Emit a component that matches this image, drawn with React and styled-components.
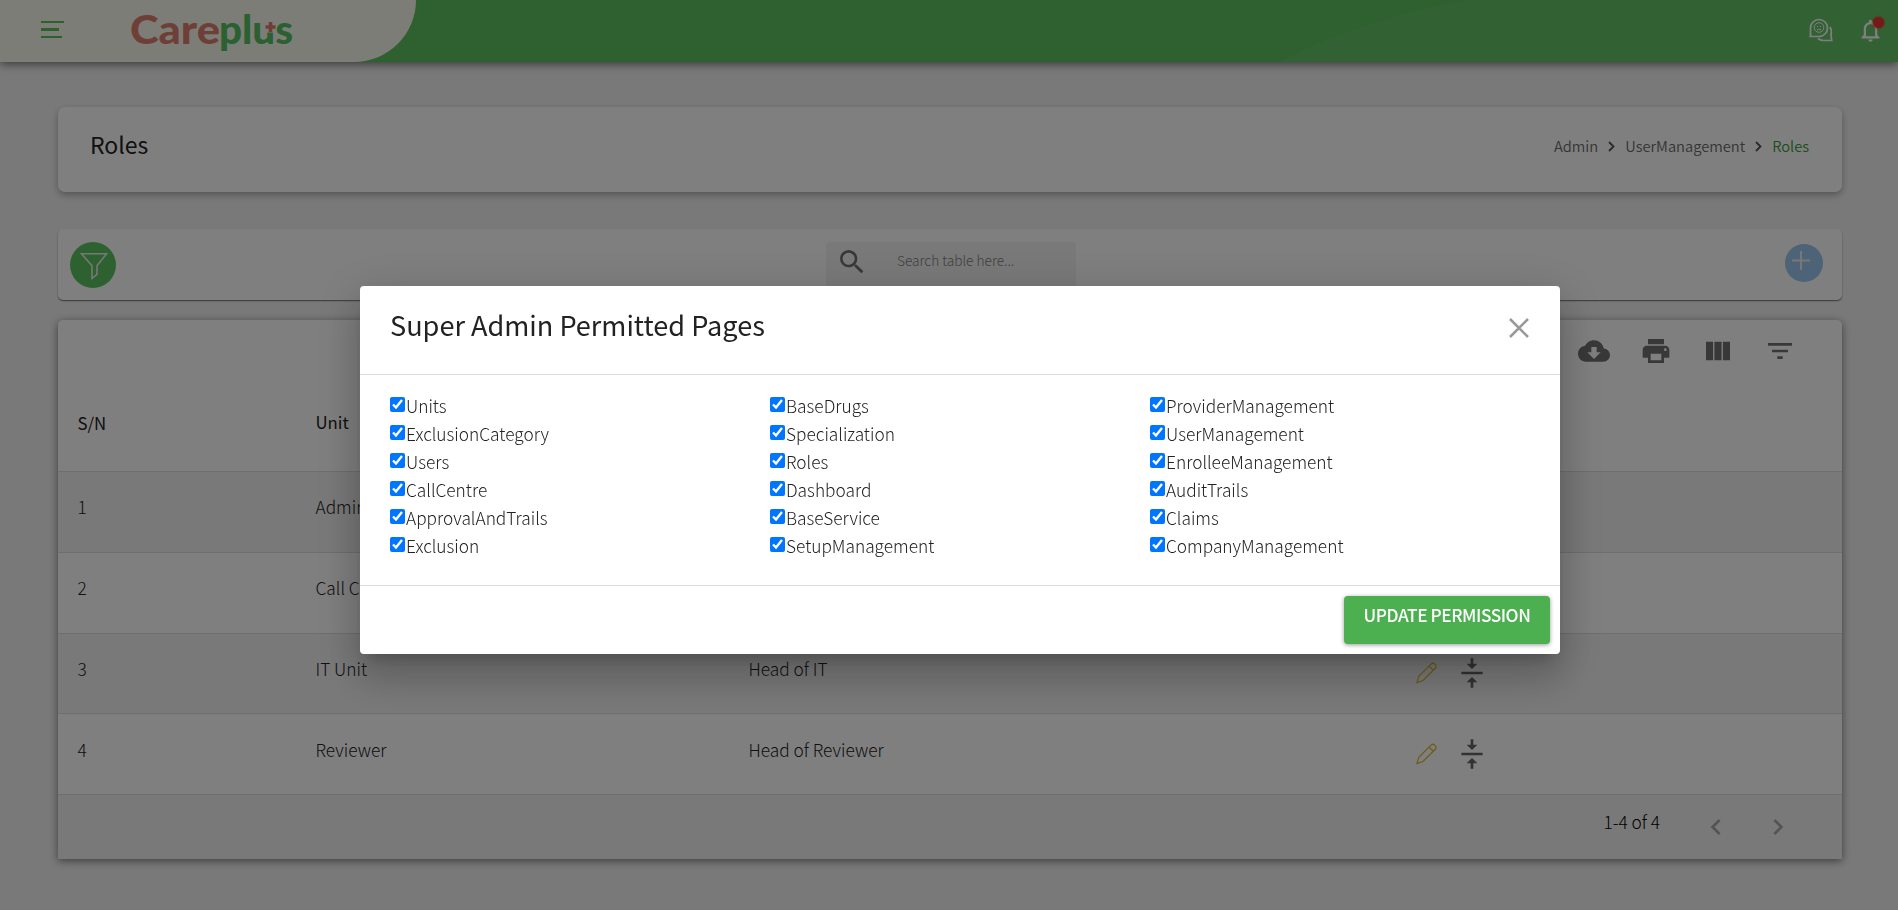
import React from "react";
import styled, { createGlobalStyle } from "styled-components";
import {
  MdCloudDownload, MdPrint, MdViewColumn, MdFilterList, MdSearch,
  MdVerticalAlignCenter, MdChevronLeft, MdChevronRight, MdNotificationsNone,
} from "react-icons/md";

const GlobalStyle = createGlobalStyle`
  *, *::before, *::after { box-sizing: border-box; }
  body {
    margin: 0;
    background: #f3f3f4;
    color: #222;
    font-family: "Noto Sans CJK SC", "Open Sans", sans-serif;
    font-size: 17.3px;
    font-weight: 300;
    line-height: 20px;
    overflow: hidden;
  }
`;

const Page = styled.div`
  height: 910px;
  display: flex;
  flex-direction: column;
`;

const TopBar = styled.header`
  position: relative;
  flex: none;
  height: 62px;
  display: flex;
  justify-content: space-between;
  background: #5cc25e;
  box-shadow: 0 2px 9px rgba(0, 0, 0, 0.55);
`;
const TopWave = styled.svg`
  position: absolute;
  top: 0;
  right: 0;
`;
const Brand = styled.div`
  width: 416px;
  display: flex;
  align-items: flex-start;
  padding-left: 41px;
  background: #fafbf0;
  border-bottom-right-radius: 62px;
`;
const Burger = styled.div`
  width: 23px;
  margin: 21px 67px 0 0;
  display: flex;
  flex-direction: column;
`;
const Bar = styled.span`
  width: ${(p) => p.$w}px;
  height: ${(p) => p.$h}px;
  margin-bottom: 5px;
  background: #58c25c;
`;
const Logo = styled.svg`
  margin: 4px 0 0 20px;
  overflow: visible;
`;
const TopIcons = styled.div`
  position: relative;
  display: flex;
  padding: 17px 14px 0 0;
  color: #fff;
`;
const ChatIcon = styled.svg`
  margin: 1px 24px 0 0;
`;
const Bell = styled.div`
  position: relative;
  height: 27px;
`;
const Dot = styled.span`
  position: absolute;
  top: 0;
  right: 0;
  width: 11px;
  height: 11px;
  border-radius: 50%;
  background: #ec3333;
  box-shadow: 0 0 2px 1px rgba(236, 51, 51, 0.55);
`;

const Main = styled.main`
  padding: 45px 56px 0 58px;
`;
const Card = styled.section`
  background: #fff;
`;
const TitleCard = styled(Card)`
  height: 85px;
  display: flex;
  justify-content: space-between;
  padding: 0 33px 0 32px;
  border-radius: 7px;
  box-shadow: 0 3px 7px rgba(0, 0, 0, 0.3);
`;
const PageTitle = styled.h1`
  margin: 22px 0 0;
  font-size: 23px;
  line-height: 30px;
  font-weight: 400;
`;
const Crumbs = styled.nav`
  display: flex;
  align-items: center;
  height: 20px;
  margin-top: 29px;
  gap: 10px;
  font-size: 14.7px;
  font-weight: 350;
  color: #6a6a6a;
`;
const Current = styled.span`
  color: #37993b;
`;

const FilterCard = styled(Card)`
  height: 71px;
  margin-top: 37px;
  display: flex;
  align-items: flex-start;
  justify-content: space-between;
  padding: 13px 19px 0 12px;
  border-radius: 5px;
  box-shadow: 0 1px 1.5px rgba(0, 0, 0, 0.55);
`;
const Round = styled.button`
  width: ${(p) => p.$size}px;
  height: ${(p) => p.$size}px;
  margin-top: ${(p) => p.$top || 0}px;
  padding: 0;
  border: 0;
  border-radius: 50%;
  background: ${(p) => p.$color};
  svg { display: block; }
`;
const SearchBox = styled.div`
  width: 250px;
  height: 46px;
  margin-right: -1px;
  display: flex;
  padding: 4px 10px;
  border-radius: 4px;
  background: #f2f2f2;
  color: #717171;
`;
const Placeholder = styled.span`
  margin: 4px 0 0 29px;
  font-size: 13.7px;
  color: #808080;
`;

const TableCard = styled(Card)`
  margin-top: 20px;
  height: 539px;
  border-radius: 5px 5px 0 0;
  box-shadow: 0 2px 9px rgba(0, 0, 0, 0.5);
`;
const Tools = styled.div`
  height: 64px;
  display: flex;
  justify-content: flex-end;
  gap: 30px;
  padding: 15px 46px 0 0;
  color: #717171;
`;
const Row = styled.div`
  height: 80.8px;
  display: grid;
  grid-template-columns: 238px 433px 667px 1fr;
  padding: 25.4px 0 0 19.5px;
  background: ${(p) => (p.$shade ? "#f2f2f2" : "#fff")};
  border-bottom: 1px solid #dcdcdc;
`;
const HeadRow = styled(Row)`
  height: 88px;
  padding: 28px 0 0 19.5px;
  font-weight: 400;
  font-size: 16.8px;
`;
const SerialHead = styled.span`
  padding-top: 1px;
`;
const Actions = styled.div`
  display: flex;
  gap: 18px;
  margin-top: -1.8px;
  color: #666;
`;
const Pencil = styled.svg`
  margin-top: 5px;
`;
const Pager = styled.div`
  height: 64px;
  display: flex;
  padding: 16px 48px 0 0;
  justify-content: flex-end;
  background: #f2f2f2;
  color: #000;
  svg { color: #a8a8a8; }
`;
const PageRange = styled.span`
  padding-top: 1px;
`;
const PagerButton = styled.span`
  width: 32px;
  margin-left: ${(p) => p.$gap}px;
`;

const Overlay = styled.div`
  position: fixed;
  inset: 0;
  padding: 286px 338px 0 360px;
  background: rgba(0, 0, 0, 0.5);
`;
const Dialog = styled.div`
  width: 1200px;
  height: 368px;
  display: flex;
  flex-direction: column;
  border-radius: 4px;
  background: #fff;
  box-shadow: 0 11px 15px -7px rgba(0, 0, 0, 0.2), 0 24px 38px 3px rgba(0, 0, 0, 0.14),
    0 9px 46px 8px rgba(0, 0, 0, 0.12);
`;
const DialogHead = styled.div`
  height: 89px;
  display: flex;
  justify-content: space-between;
  padding: 19px 30px 0;
  border-bottom: 1px solid #dedede;
`;
const DialogTitle = styled.h2`
  margin: 0;
  font-size: 27.1px;
  line-height: 40px;
  font-weight: 400;
`;
const CloseIcon = styled.svg`
  margin: 13px 1px 0 0;
`;
const Permissions = styled.div`
  height: 211px;
  display: grid;
  grid-template-columns: repeat(3, 380px);
  grid-auto-rows: 28px;
  padding: 21px 30px 0;
  border-bottom: 1px solid #dedede;
`;
const Permission = styled.label`
  display: flex;
  align-items: flex-start;
  input { width: 15px; height: 15px; margin: 1px 1px 0 0; }
`;
const DialogFoot = styled.div`
  display: flex;
  justify-content: flex-end;
  padding: 10px;
`;
const UpdateButton = styled.button`
  width: 206px;
  height: 48px;
  padding: 0 0 11px;
  border: 0;
  border-radius: 4px;
  background: #4caf50;
  color: #fff;
  font: 500 17.3px/24px "Noto Sans CJK SC", "Open Sans", sans-serif;
  letter-spacing: -0.45px;
  white-space: nowrap;
  box-shadow: 0 1px 4px rgba(0, 0, 0, 0.4);
`;

const permissions = [
  "Units", "BaseDrugs", "ProviderManagement",
  "ExclusionCategory", "Specialization", "UserManagement",
  "Users", "Roles", "EnrolleeManagement",
  "CallCentre", "Dashboard", "AuditTrails",
  "ApprovalAndTrails", "BaseService", "Claims",
  "Exclusion", "SetupManagement", "CompanyManagement",
];

const rows = [
  ["Admin", ""],
  ["Call Centre", ""],
  ["IT Unit", "Head of IT"],
  ["Reviewer", "Head of Reviewer"],
];

const Chevron = () => (
  <svg width="7" height="11" viewBox="0 0 7 11">
    <path d="M1 1l4.500 4.500L1 10" fill="none" stroke="#555" strokeWidth="1.8" />
  </svg>
);

export default function App() {
  return (
    <>
      <GlobalStyle />
      <Page>
        <TopBar>
          <TopWave width="618" height="62">
            <path d="M0 62C50 35 120 12 187 0H618V62Z" fill="#fff" fillOpacity=".05" />
          </TopWave>
          <Brand>
            <Burger>
              <Bar $w={23} $h={2} />
              <Bar $w={18} $h={3} />
              <Bar $w={21} $h={2} />
            </Burger>
            <Logo width="162" height="50">
              <g fontFamily="Lato, sans-serif" fontWeight="900" fontSize="40">
                <text x="-21" y="39.5" textLength="90" lengthAdjust="spacingAndGlyphs" fill="#dc7f6c">Care</text>
                <text x="68" y="39.5" textLength="74" lengthAdjust="spacingAndGlyphs" fill="#56c260">plus</text>
              </g>
              <path d="M113.500 15h12v13.500h-12Z" fill="#fafbf0" />
              <path d="M119.500 18v10M114.500 23h10" stroke="#dc7f6c" strokeWidth="3.600" />
            </Logo>
          </Brand>
          <TopIcons>
            <ChatIcon width="24" height="24" viewBox="0 0 24 24" fill="none" stroke="#fff" strokeWidth="1.7">
              <path d="M1.500 17.500V10a8.500 8.500 0 1 1 8.500 8.500H1.200l.9-2" />
              <circle cx="10" cy="9.500" r="4.800" strokeWidth="1" />
              <path d="M8 8.500h1M11 8.500h1M8 12q2-2 4 0" strokeWidth="1" />
              <path d="M21 9q2 3 1 8l.7 5.500H14q-3-.2-5-2" />
            </ChatIcon>
            <Bell>
              <MdNotificationsNone size={27} />
              <Dot />
            </Bell>
          </TopIcons>
        </TopBar>
        <Main>
          <TitleCard>
            <PageTitle>Roles</PageTitle>
            <Crumbs>
              <span>Admin</span>
              <Chevron />
              <span>UserManagement</span>
              <Chevron />
              <Current>Roles</Current>
            </Crumbs>
          </TitleCard>
          <FilterCard>
            <Round $size={46} $color="#5ac561">
              <svg width="46" height="46" fill="none" stroke="#eee" strokeWidth="1.6">
                <path d="M11.500 11.800h25l-9.500 12v8.500l-5 4V23.800Z" />
              </svg>
            </Round>
            <SearchBox>
              <MdSearch size={32} />
              <Placeholder>Search table here...</Placeholder>
            </SearchBox>
            <Round $size={38} $top={2} $color="#9ac6ee">
              <svg width="38" height="38" stroke="#eee" strokeWidth="2">
                <path d="M16 7v19M7 16.500h18" />
              </svg>
            </Round>
          </FilterCard>
          <TableCard>
            <Tools>
              <MdCloudDownload size={32} />
              <MdPrint size={32} />
              <MdViewColumn size={32} />
              <MdFilterList size={32} />
            </Tools>
            <HeadRow>
              <SerialHead>S/N</SerialHead>
              <span>Unit</span>
            </HeadRow>
            {rows.map(([unit, role], i) => (
              <Row key={unit} $shade={i % 2 === 0}>
                <span>{i + 1}</span>
                <span>{unit}</span>
                <span>{role}</span>
                <Actions>
                  <Pencil width="22" height="22" viewBox="0 0 22 22" fill="none" stroke="#d8b62c" strokeWidth="1.2">
                    <path d="M1 20.500l1.800-6.300L15 2.100q2-1.800 4 .2t.3 4L7 18.500 1 20.500ZM13 4l4.500 4.500" />
                  </Pencil>
                  <MdVerticalAlignCenter size={32} />
                </Actions>
              </Row>
            ))}
            <Pager>
              <PageRange>1-4 of 4</PageRange>
              <PagerButton $gap={40}><MdChevronLeft size={32} /></PagerButton>
              <PagerButton $gap={30}><MdChevronRight size={32} /></PagerButton>
            </Pager>
          </TableCard>
        </Main>
      </Page>
      <Overlay>
        <Dialog role="dialog">
          <DialogHead>
            <DialogTitle>Super Admin Permitted Pages</DialogTitle>
            <CloseIcon width="20" height="20" stroke="#999" strokeWidth="2.6">
              <path d="M1 1l18 18M19 1L1 19" />
            </CloseIcon>
          </DialogHead>
          <Permissions>
            {permissions.map((name) => (
              <Permission key={name}>
                <input type="checkbox" defaultChecked />
                {name}
              </Permission>
            ))}
          </Permissions>
          <DialogFoot>
            <UpdateButton>UPDATE PERMISSION</UpdateButton>
          </DialogFoot>
        </Dialog>
      </Overlay>
    </>
  );
}
